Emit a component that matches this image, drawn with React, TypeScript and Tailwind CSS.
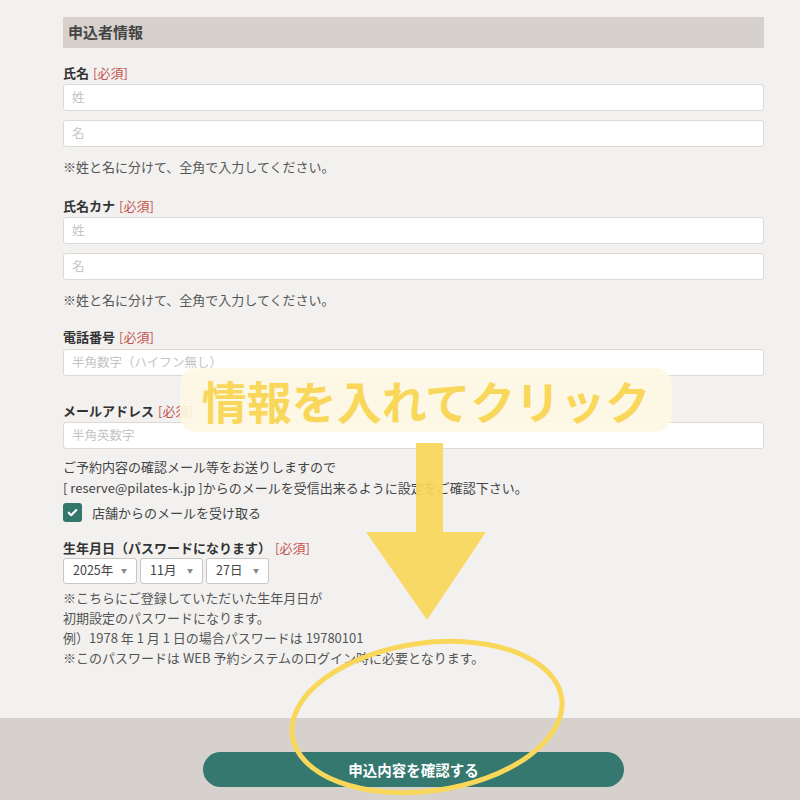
const font = { fontFamily: '"Noto Sans CJK JP", "Noto Sans", sans-serif' }

function Label({ text }: { text: string }) {
  return (
    <div className="flex h-[20px] items-center text-[13px] font-bold leading-[20px] text-[#333]">
      {text}
      <span className="ml-1 font-normal text-[#c2534e]">[必須]</span>
    </div>
  )
}

function Input({ ph, className = '' }: { ph: string; className?: string }) {
  return (
    <div className={`flex h-[27px] items-center rounded-[3px] border border-[#dcd9d6] bg-white px-[8px] text-[12.5px] text-[#c4c4c4] ${className}`}>
      {ph}
    </div>
  )
}

function Note({ children, className = '' }: { children: React.ReactNode; className?: string }) {
  return <p className={`text-[13px] leading-[20px] text-[#555] ${className}`}>{children}</p>
}

function Select({ value, w }: { value: string; w: string }) {
  return (
    <div className={`flex h-[26px] items-center justify-between rounded-[3px] border border-[#c9c6c3] bg-white pl-[9px] pr-[9px] text-[12.5px] text-[#444] ${w}`}>
      <span>{value}</span>
      <span className="text-[6px] text-[#888]">▼</span>
    </div>
  )
}

export default function App() {
  return (
    <div style={font} className="relative h-[800px] w-[800px] overflow-hidden bg-[#f2f1ef]">
      <div className="ml-[63px] w-[701px] pt-[17px]">
        {/* 見出し */}
        <div className="flex h-[31px] items-center bg-[#d6d1cc] px-[5px] text-[15px] font-bold text-[#444]">
          申込者情報
        </div>

        {/* 氏名 */}
        <div className="mt-[15px]">
          <Label text="氏名" />
          <Input ph="姓" className="mt-[1px]" />
          <Input ph="名" className="mt-[9px]" />
          <Note className="mt-[10px]">※姓と名に分けて、全角で入力してください。</Note>
        </div>

        {/* 氏名カナ */}
        <div className="mt-[19px]">
          <Label text="氏名カナ" />
          <Input ph="姓" className="mt-[1px]" />
          <Input ph="名" className="mt-[9px]" />
          <Note className="mt-[10px]">※姓と名に分けて、全角で入力してください。</Note>
        </div>

        {/* 電話番号 */}
        <div className="mt-[17px]">
          <Label text="電話番号" />
          <Input ph="半角数字（ハイフン無し）" className="mt-[2px]" />
        </div>

        {/* メールアドレス */}
        <div className="mt-[25px]">
          <Label text="メールアドレス" />
          <Input ph="半角英数字" className="mt-[1px]" />
          <div className="mt-[7px] text-[13px] leading-[21px] text-[#444]">
            <p>ご予約内容の確認メール等をお送りしますので</p>
            <p>[ reserve@pilates-k.jp ]からのメールを受信出来るように設定をご確認下さい。</p>
          </div>
          <div className="mt-[5px] flex items-center gap-[10px]">
            <span className="flex h-[19px] w-[19px] items-center justify-center rounded-[3px] bg-[#33766c]">
              <svg viewBox="0 0 24 24" className="h-[13px] w-[13px]" fill="none" stroke="white" strokeWidth="4" strokeLinecap="round" strokeLinejoin="round">
                <path d="M5 12.5l4.5 4.5L19 7.5" />
              </svg>
            </span>
            <span className="text-[13px] text-[#444]">店舗からのメールを受け取る</span>
          </div>
        </div>

        {/* 生年月日 */}
        <div className="mt-[15px]">
          <Label text="生年月日（パスワードになります）" />
          <div className="flex gap-[3px]">
            <Select value="2025年" w="w-[74px]" />
            <Select value="11月" w="w-[63px]" />
            <Select value="27日" w="w-[63px]" />
          </div>
          <div className="mt-[4px]">
            <Note>※こちらにご登録していただいた生年月日が</Note>
            <Note>初期設定のパスワードになります。</Note>
            <Note>例）1978 年 1 月 1 日の場合パスワードは 19780101</Note>
            <Note>※このパスワードは WEB 予約システムのログイン時に必要となります。</Note>
          </div>
        </div>
      </div>

      {/* フッター */}
      <div className="absolute bottom-0 left-0 flex h-[82px] w-full justify-center bg-[#d6d1cc] pt-[34px]">
        <div className="ml-[27px] flex h-[35px] w-[421px] items-center justify-center rounded-full bg-[#35786f] text-[14.5px] font-bold text-white">
          申込内容を確認する
        </div>
      </div>

      {/* 注釈オーバーレイ */}
      <div className="absolute left-[180px] top-[368px] flex h-[64px] w-[492px] items-center justify-center rounded-[16px] bg-[#fdf8e3]/90">
        <span className="text-[45px] font-bold leading-none text-[#f9d75a]">情報を入れてクリック</span>
      </div>
      <svg className="absolute left-0 top-0" width="800" height="800" viewBox="0 0 800 800">
        <path d="M416 443H443V532H486L427 620L366 532H416Z" fill="#f9d75a" opacity="0.92" />
        <ellipse cx="427" cy="717" rx="136" ry="74" fill="none" stroke="#f9d75a" strokeWidth="5" transform="rotate(-8 427 717)" />
      </svg>
    </div>
  )
}
